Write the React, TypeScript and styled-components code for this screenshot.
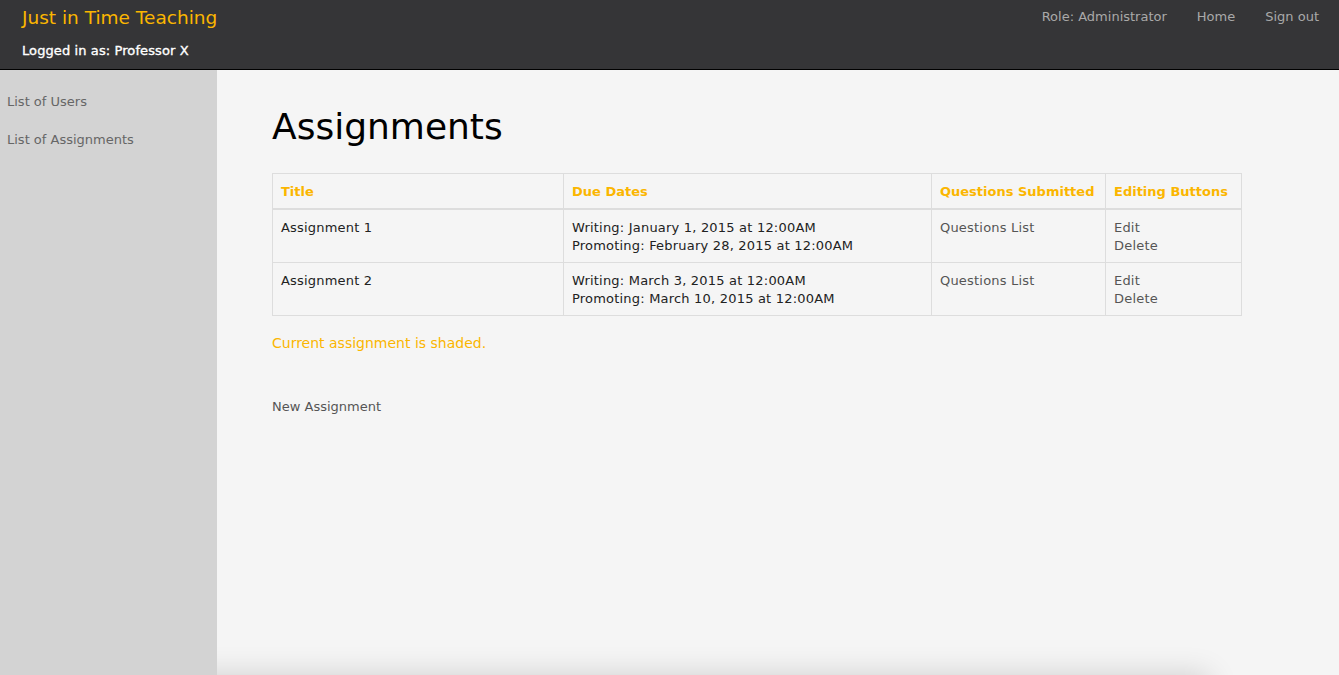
import React from "react";
import styled, { createGlobalStyle } from "styled-components";

const Global = createGlobalStyle`
  html, body { margin: 0; padding: 0; background: #f5f5f5; }
  body { font-family: "DejaVu Sans", Verdana, sans-serif; font-size: 13px; overflow: hidden; }
  a { text-decoration: none; }
`;

const Header = styled.header`
  height: 69px;
  background: #353537;
  border-bottom: 1px solid #000;
  display: flex;
  justify-content: space-between;
  padding: 0 20px 0 22px;
`;

const Brand = styled.div`
  display: flex;
  flex-direction: column;
`;

const Title = styled.a`
  color: #fbb600;
  font-size: 18.5px;
  line-height: 20px;
  margin-top: 8px;
`;

const LoggedIn = styled.div`
  color: #fff;
  font-size: 13px;
  letter-spacing: 0.1px;
  -webkit-text-stroke: 0.35px #fff;
  margin-top: 15px;
`;

const Nav = styled.nav`
  display: flex;
  gap: 30px;
  padding-top: 9px;
`;

const NavLink = styled.a`
  color: #a9a9a9;
  font-size: 13px;
`;

const Body = styled.div`
  display: flex;
  height: calc(100vh - 70px);
`;

const Sidebar = styled.aside`
  width: 217px;
  background: #d3d3d3;
  padding-top: 24px;
  display: flex;
  flex-direction: column;
  gap: 23px;
`;

const SideLink = styled.a`
  color: #666;
  padding-left: 7px;
  font-size: 13px;
  line-height: 15px;
`;

const Main = styled.main`
  flex: 1;
  padding: 36px 0 0 55px;
`;

const H1 = styled.h1`
  font-family: "DejaVu Sans", Verdana, sans-serif;
  font-weight: normal;
  font-size: 36px;
  line-height: 42px;
  margin: 0 0 25px;
  color: #000;
`;

const Table = styled.table`
  border-collapse: collapse;
  table-layout: fixed;
  width: 970px;
  font-size: 13px;
  letter-spacing: 0.2px;
`;

const Th = styled.th<{ w?: number }>`
  box-sizing: border-box;
  text-align: left;
  white-space: nowrap;
  color: #fbb600;
  font-size: 13px;
  letter-spacing: 0;
  height: 35px;
  padding: 1px 8px 0;
  border: 1px solid #ddd;
  border-bottom: 2px solid #ddd;
  width: ${(p) => (p.w ? `${p.w}px` : "auto")};
`;

const Td = styled.td<{ link?: boolean }>`
  vertical-align: top;
  padding: 9px 8px 7px;
  border: 1px solid #ddd;
  line-height: 18px;
  color: ${(p) => (p.link ? "#555" : "#222")};
  height: 36px;
`;

const Note = styled.p`
  color: #fbb600;
  font-size: 14px;
  margin: 19px 0 0;
`;

const NewLink = styled.a`
  display: block;
  color: #555;
  font-size: 13px;
  margin-top: 48px;
`;

const Footer = styled.div`
  height: 40px;
  margin: 0 130px 0 110px;
  box-shadow: 0 0 30px rgba(0, 0, 0, 0.16);
  background: #f5f5f5;
`;

const rows = [
  { t: "Assignment 1", w: "January 1, 2015 at 12:00AM", p: "February 28, 2015 at 12:00AM" },
  { t: "Assignment 2", w: "March 3, 2015 at 12:00AM", p: "March 10, 2015 at 12:00AM" },
];

export default function App() {
  return (
    <>
      <Global />
      <Header>
        <Brand>
          <Title>Just in Time Teaching</Title>
          <LoggedIn>Logged in as: Professor X</LoggedIn>
        </Brand>
        <Nav>
          <NavLink>Role: Administrator</NavLink>
          <NavLink>Home</NavLink>
          <NavLink>Sign out</NavLink>
        </Nav>
      </Header>
      <Body>
        <Sidebar>
          <SideLink>List of Users</SideLink>
          <SideLink>List of Assignments</SideLink>
        </Sidebar>
        <Main>
          <H1>Assignments</H1>
          <Table>
            <thead>
              <tr>
                <Th w={291}>Title</Th>
                <Th w={368}>Due Dates</Th>
                <Th w={174}>Questions Submitted</Th>
                <Th>Editing Buttons</Th>
              </tr>
            </thead>
            <tbody>
              {rows.map((r) => (
                <tr key={r.t}>
                  <Td>{r.t}</Td>
                  <Td>
                    Writing: {r.w}
                    <br />
                    Promoting: {r.p}
                  </Td>
                  <Td link>Questions List</Td>
                  <Td link>
                    Edit
                    <br />
                    Delete
                  </Td>
                </tr>
              ))}
            </tbody>
          </Table>
          <Note>Current assignment is shaded.</Note>
          <NewLink>New Assignment</NewLink>
        </Main>
      </Body>
      <Footer />
    </>
  );
}
